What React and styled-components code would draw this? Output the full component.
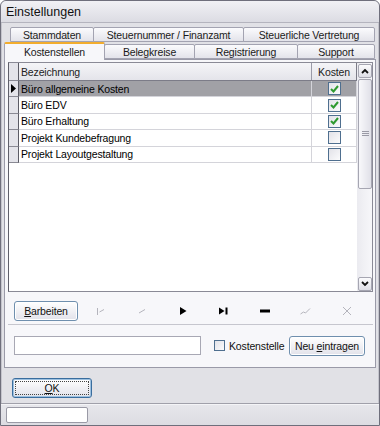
import React from 'react';
import styled, { createGlobalStyle } from 'styled-components';

const GlobalStyle = createGlobalStyle`
  html, body {
    margin: 0;
    padding: 0;
    background: #ffffff;
  }
  body {
    font-family: "Liberation Sans", Arial, sans-serif;
    font-size: 10.5px;
    letter-spacing: -0.15px;
    color: #000;
  }
`;

const Window = styled.div`
  box-sizing: border-box;
  width: 380px;
  height: 426px;
  border: 1px solid #6f6f7c;
  border-radius: 6px 6px 0 0;
  background: #e1e1e6;
  box-shadow: inset 0 0 0 1px #c4c4cc;
  display: flex;
  flex-direction: column;
  overflow: hidden;
`;

const TitleBar = styled.div`
  box-sizing: border-box;
  height: 22px;
  flex: none;
  padding: 0 5px;
  display: flex;
  align-items: center;
  font-size: 12.5px;
  letter-spacing: 0;
  color: #111;
  background: linear-gradient(to bottom, #f1f1f5, #dcdce3);
  border-bottom: 1px solid #b4b4be;
  border-radius: 5px 5px 0 0;
`;

const TabRows = styled.div`
  margin-top: 4px;
  display: flex;
  flex-direction: column;
  position: relative;
  z-index: 1;
`;

const TabRow = styled.div`
  display: flex;
  height: ${({ h }) => h}px;
  padding-left: ${({ indent }) => indent}px;
  padding-right: 2px;
  align-items: flex-end;
`;

const Tab = styled.div`
  box-sizing: border-box;
  width: ${({ w }) => w}px;
  height: ${({ active }) => (active ? '18px' : '15px')};
  display: flex;
  align-items: center;
  justify-content: center;
  white-space: nowrap;
  color: #1a1a1a;
  border: 1px solid #a3a3b1;
  border-bottom: ${({ active }) => (active ? 'none' : '1px solid #a3a3b1')};
  border-top: ${({ active }) => (active ? '2px solid #f2ad2e' : '1px solid #a3a3b1')};
  border-radius: 2px 2px 0 0;
  margin-right: -1px;
  margin-bottom: ${({ active }) => (active ? '-1px' : '0')};
  background: ${({ active }) =>
    active ? '#f7f7fa' : 'linear-gradient(to bottom, #fbfbfd, #e3e3ea)'};
  position: relative;
  z-index: ${({ active }) => (active ? 2 : 1)};
`;

const Panel = styled.div`
  box-sizing: border-box;
  height: 309px;
  flex: none;
  margin: 0 3px;
  border: 1px solid #9a9aa8;
  background: #f7f7fa;
  padding: 2px 2px 0 3px;
  display: flex;
  flex-direction: column;
`;

const GridFrame = styled.div`
  box-sizing: border-box;
  height: 230px;
  flex: none;
  display: flex;
  border: 1px solid #8a8a96;
  border-left-color: #5f5f6a;
  background: #fff;
`;

const Table = styled.div`
  flex: 1;
  display: flex;
  flex-direction: column;
`;

const Row = styled.div`
  box-sizing: border-box;
  display: flex;
  height: ${({ header }) => (header ? 18 : 16.4)}px;
  background: ${({ header, selected }) =>
    header ? 'linear-gradient(to bottom, #f5f5f8, #e4e4ea)' : selected ? '#a1a1a6' : '#ffffff'};
  border-bottom: 1px solid ${({ header }) => (header ? '#7c7c88' : '#d4d4da')};
`;

const Indicator = styled.div`
  box-sizing: border-box;
  width: 10px;
  flex: none;
  background: #e4e4ea;
  border-right: 1px solid #5c5c66;
  margin-bottom: -1px;
  border-bottom: 1px solid #8a8a94;
  display: flex;
  align-items: center;
  justify-content: center;
`;

const NameCell = styled.div`
  flex: 1;
  padding-left: 2px;
  display: flex;
  align-items: center;
  white-space: nowrap;
  color: ${({ header }) => (header ? '#222' : '#000')};
  border-right: 1px solid ${({ header }) => (header ? '#9a9aa8' : '#d4d4da')};
`;

const CostCell = styled.div`
  box-sizing: border-box;
  width: 45px;
  flex: none;
  display: flex;
  align-items: center;
  justify-content: center;
  color: #222;
  border-right: 1px solid ${({ header }) => (header ? '#7c7c88' : '#d4d4da')};
`;

const CheckBox = styled.span`
  box-sizing: border-box;
  width: ${({ size }) => size}px;
  height: ${({ size }) => size}px;
  flex: none;
  border: 1px solid #4f6f8f;
  background: linear-gradient(135deg, #e2e2e8, #fbfbfc);
  display: flex;
  align-items: center;
  justify-content: center;
`;

const Scrollbar = styled.div`
  box-sizing: border-box;
  width: 15px;
  flex: none;
  display: flex;
  flex-direction: column;
  background: linear-gradient(to right, #ebebf0, #f7f7fa);
  padding: 1px 0 0 1px;
`;

const ScrollButton = styled.div`
  box-sizing: border-box;
  height: 14px;
  flex: none;
  border: 1px solid #a6a6b2;
  border-radius: 2px;
  background: linear-gradient(to bottom, #fbfbfd, #dedee6);
  display: flex;
  align-items: center;
  justify-content: center;
`;

const Thumb = styled.div`
  box-sizing: border-box;
  height: 110px;
  flex: none;
  margin-top: 1px;
  border: 1px solid #a6a6b2;
  border-radius: 2px;
  background: linear-gradient(to right, #f8f8fb, #e0e0e8);
  display: flex;
  align-items: center;
  justify-content: center;
`;

const Track = styled.div`
  flex: 1;
`;

const Toolbar = styled.div`
  box-sizing: border-box;
  height: 33px;
  flex: none;
  padding: 6px 0 0 6px;
  display: flex;
  align-items: center;
  border-bottom: 1px solid #c6c6ce;
`;

const Button = styled.button`
  box-sizing: border-box;
  width: ${({ w }) => w}px;
  height: 20px;
  padding: 0;
  font-family: inherit;
  font-size: 10.5px;
  letter-spacing: -0.15px;
  color: #111;
  border: 1px solid ${({ focus }) => (focus ? '#3a6d9e' : '#6f8fae')};
  border-radius: 3px;
  background: linear-gradient(to bottom, #ffffff, #e2e2ea);
  box-shadow: ${({ focus }) => (focus ? 'inset 0 0 0 1px #9cc0e0' : 'inset 0 0 0 1px #ffffff')};
  display: flex;
  align-items: center;
  justify-content: center;
  position: relative;
  white-space: nowrap;
`;

const FocusRing = styled.span`
  position: absolute;
  inset: 2px;
  border: 1px dotted #444;
`;

const NavSlot = styled.div`
  width: 41px;
  flex: none;
  display: flex;
  align-items: center;
  justify-content: center;
`;

const EntryRow = styled.div`
  flex: 1;
  display: flex;
  align-items: center;
  padding-left: 6px;
  padding-bottom: 1px;
`;

const TextInput = styled.div`
  box-sizing: border-box;
  width: 187px;
  height: 19px;
  border: 1px solid #a8a8b4;
  background: #fff;
`;

const CheckLabel = styled.label`
  width: 75px;
  margin-left: 13px;
  display: flex;
  align-items: center;
  gap: 4px;
  color: #111;
  white-space: nowrap;
`;

const Footer = styled.div`
  box-sizing: border-box;
  height: 36px;
  flex: none;
  padding: 10px 0 0 11px;
  border-bottom: 1px solid #a0a0aa;
`;

const StatusBar = styled.div`
  flex: 1;
  padding: 2px 0 0 5px;
  background: linear-gradient(to bottom, #e6e6eb, #dcdce2);
  border-top: 1px solid #f4f4f7;
`;

const StatusField = styled.div`
  box-sizing: border-box;
  width: 82px;
  height: 16px;
  border: 1px solid #9a9aa6;
  border-radius: 2px;
  background: #fff;
`;

const Check = () => (
  <svg width="9" height="8" viewBox="0 0 9 8">
    <path d="M1 4 L3.5 6.5 L8 1" fill="none" stroke="#2f9a2f" strokeWidth="2" />
  </svg>
);

const Chevron = ({ up }) => (
  <svg width="8" height="6" viewBox="0 0 8 6">
    <path
      d={up ? 'M1 5 L4 2 L7 5' : 'M1 1 L4 4 L7 1'}
      fill="none"
      stroke="#111"
      strokeWidth="1.8"
    />
  </svg>
);

const Grip = () => (
  <svg width="7" height="6" viewBox="0 0 7 6">
    <path d="M0 0.5 H7 M0 2.5 H7 M0 4.5 H7" stroke="#9a9aa6" strokeWidth="1" />
  </svg>
);

const dim = '#b4b4bc';

const NavIcons = [
  <svg width="10" height="10" viewBox="0 0 10 10">
    <path d="M1.5 2 V9 M3.5 6 L8 3.5" stroke={dim} strokeWidth="1" fill="none" />
  </svg>,
  <svg width="10" height="10" viewBox="0 0 10 10">
    <path d="M2 7 L8 3.5" stroke={dim} strokeWidth="1" fill="none" />
  </svg>,
  <svg width="10" height="10" viewBox="0 0 10 10">
    <path d="M2 1 L8.5 5 L2 9 Z" fill="#000" />
  </svg>,
  <svg width="11" height="10" viewBox="0 0 11 10">
    <path d="M1 1.5 L6.5 5 L1 8.5 Z" fill="#000" />
    <rect x="7.5" y="1.5" width="2" height="7" fill="#000" />
  </svg>,
  <svg width="10" height="10" viewBox="0 0 10 10">
    <rect x="0" y="3.5" width="10" height="3" fill="#000" />
  </svg>,
  <svg width="11" height="10" viewBox="0 0 11 10">
    <path d="M0.5 8 L3.5 6 L5.5 7 L10 2.5" stroke={dim} strokeWidth="1" fill="none" />
  </svg>,
  <svg width="10" height="10" viewBox="0 0 10 10">
    <path d="M1 1 L9 9 M9 1 L1 9" stroke={dim} strokeWidth="1" fill="none" />
  </svg>,
];

const rows = [
  { name: 'Büro allgemeine Kosten', cost: true },
  { name: 'Büro EDV', cost: true },
  { name: 'Büro Erhaltung', cost: true },
  { name: 'Projekt Kundebefragung', cost: false },
  { name: 'Projekt Layoutgestaltung', cost: false },
];

const topTabs = [
  { label: 'Stammdaten', w: 84 },
  { label: 'Steuernummer / Finanzamt', w: 151 },
  { label: 'Steuerliche Vertretung', w: 132 },
];

const bottomTabs = [
  { label: 'Kostenstellen', w: 101, active: true },
  { label: 'Belegkreise', w: 91 },
  { label: 'Registrierung', w: 104 },
  { label: 'Support', w: 78 },
];

export default function App() {
  return (
    <>
      <GlobalStyle />
      <Window>
        <TitleBar>Einstellungen</TitleBar>
        <TabRows>
          <TabRow h={15} indent={9}>
            {topTabs.map((t) => (
              <Tab key={t.label} w={t.w}>
                {t.label}
              </Tab>
            ))}
          </TabRow>
          <TabRow h={17} indent={3}>
            {bottomTabs.map((t) => (
              <Tab key={t.label} w={t.w} active={t.active}>
                {t.label}
              </Tab>
            ))}
          </TabRow>
        </TabRows>
        <Panel>
          <GridFrame>
            <Table>
              <Row header>
                <Indicator />
                <NameCell header>Bezeichnung</NameCell>
                <CostCell header>Kosten</CostCell>
              </Row>
              {rows.map((r, i) => (
                <Row key={r.name} selected={i === 0}>
                  <Indicator>
                    {i === 0 && (
                      <svg width="5" height="9" viewBox="0 0 5 9">
                        <path d="M0 0 L5 4.5 L0 9 Z" fill="#000" />
                      </svg>
                    )}
                  </Indicator>
                  <NameCell>{r.name}</NameCell>
                  <CostCell>
                    <CheckBox size={13}>{r.cost && <Check />}</CheckBox>
                  </CostCell>
                </Row>
              ))}
            </Table>
            <Scrollbar>
              <ScrollButton>
                <Chevron up />
              </ScrollButton>
              <Thumb>
                <Grip />
              </Thumb>
              <Track />
              <ScrollButton>
                <Chevron />
              </ScrollButton>
            </Scrollbar>
          </GridFrame>
          <Toolbar>
            <Button w={64} style={{ marginRight: 2 }}>
              <span>
                <u>B</u>arbeiten
              </span>
            </Button>
            {NavIcons.map((icon, i) => (
              <NavSlot key={i}>{icon}</NavSlot>
            ))}
          </Toolbar>
          <EntryRow>
            <TextInput />
            <CheckLabel>
              <CheckBox size={11} />
              Kostenstelle
            </CheckLabel>
            <Button w={76}>
              <span>
                Neu <u>e</u>intragen
              </span>
            </Button>
          </EntryRow>
        </Panel>
        <Footer>
          <Button w={80} focus>
            <FocusRing />
            <span>
              <u>O</u>K
            </span>
          </Button>
        </Footer>
        <StatusBar>
          <StatusField />
        </StatusBar>
      </Window>
    </>
  );
}
